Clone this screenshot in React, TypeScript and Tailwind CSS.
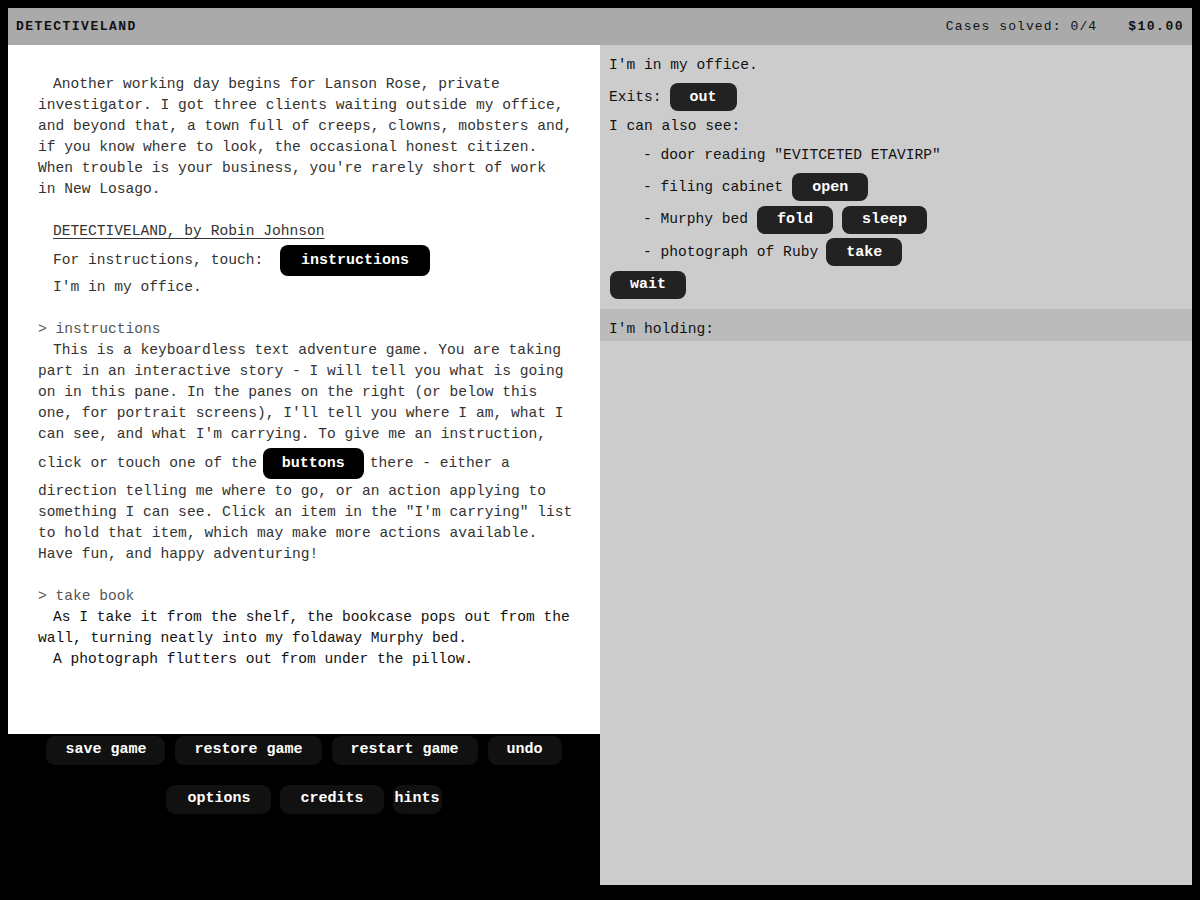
import React from "react";

const mono = "font-['Liberation_Mono',monospace]";

function Cmd({ children, className = "" }: { children: React.ReactNode; className?: string }) {
  return (
    <span
      className={`inline-flex h-[31px] items-center rounded-[8px] bg-black px-[19px] text-[15px] font-bold text-white ${className}`}
    >
      {children}
    </span>
  );
}

function Action({ children, className = "" }: { children: React.ReactNode; className?: string }) {
  return (
    <span
      className={`inline-flex h-[28px] items-center rounded-[8px] bg-[#222] px-[20px] text-[15px] font-bold text-white ${className}`}
    >
      {children}
    </span>
  );
}

function MenuButton({ children, className = "px-[19px]" }: { children: React.ReactNode; className?: string }) {
  return (
    <span
      className={`inline-flex h-[29px] items-center rounded-[9px] bg-[#111] text-[15px] font-bold text-white ${className}`}
    >
      {children}
    </span>
  );
}

function Transcript() {
  return (
    <div className="h-[689px] bg-white pl-[30px] pr-[20px] pt-[29px] text-[14.6px] leading-[21px] text-[#333]">
      <p className="indent-[15px] whitespace-nowrap">
        Another working day begins for Lanson Rose, private
        <br />
        investigator. I got three clients waiting outside my office,
        <br />
        and beyond that, a town full of creeps, clowns, mobsters and,
        <br />
        if you know where to look, the occasional honest citizen.
        <br />
        When trouble is your business, you're rarely short of work
        <br />
        in New Losago.
      </p>

      <p className="mt-[21px] ml-[15px] underline underline-offset-[3px]">DETECTIVELAND, by Robin Johnson</p>
      <div className="ml-[15px] mt-[3px] flex h-[31px] items-center whitespace-pre">
        <span>For instructions, touch: </span>
        <Cmd className="ml-[8px] px-[21px]">instructions</Cmd>
      </div>
      <p className="ml-[15px] mt-[1px]">I'm in my office.</p>

      <p className="mt-[21px] text-[#555]">&gt; instructions</p>
      <p className="indent-[15px] whitespace-nowrap">
        This is a keyboardless text adventure game. You are taking
        <br />
        part in an interactive story - I will tell you what is going
        <br />
        on in this pane. In the panes on the right (or below this
        <br />
        one, for portrait screens), I'll tell you where I am, what I
        <br />
        can see, and what I'm carrying. To give me an instruction,
      </p>
      <div className="flex h-[36px] items-center whitespace-pre">
        <span>click or touch one of the </span>
        <Cmd className="ml-[-3px] mr-[6px]">buttons</Cmd>
        <span>there - either a</span>
      </div>
      <p className="whitespace-nowrap">
        direction telling me where to go, or an action applying to
        <br />
        something I can see. Click an item in the "I'm carrying" list
        <br />
        to hold that item, which may make more actions available.
        <br />
        Have fun, and happy adventuring!
      </p>

      <p className="mt-[21px] text-[#555]">&gt; take book</p>
      <div className="text-[#111]">
        <p className="indent-[15px] whitespace-nowrap">
          As I take it from the shelf, the bookcase pops out from the
          <br />
          wall, turning neatly into my foldaway Murphy bed.
        </p>
        <p className="indent-[15px]">A photograph flutters out from under the pillow.</p>
      </div>
    </div>
  );
}

function RoomPane() {
  return (
    <div className="flex h-[840px] w-[592px] flex-col bg-[#ccc] text-[14.6px] leading-[21px] text-[#111]">
      <div className="px-[9px] pt-[10px]">
        <p>I'm in my office.</p>
        <div className="mt-[7px] flex h-[28px] items-center gap-[8px]">
          <span>Exits:</span>
          <Action>out</Action>
        </div>
        <div className="mt-[1px] flex h-[28px] items-center">I can also see:</div>
        <div className="ml-[34px] mt-[1px] flex h-[28px] items-center">- door reading "EVITCETED ETAVIRP"</div>
        <div className="ml-[34px] mt-[4px] flex h-[28px] items-center gap-[9px]">
          <span>- filing cabinet</span>
          <Action>open</Action>
        </div>
        <div className="ml-[34px] mt-[4.5px] flex h-[28px] items-center gap-[9px]">
          <span>- Murphy bed</span>
          <Action>fold</Action>
          <Action>sleep</Action>
        </div>
        <div className="ml-[34px] mt-[4.5px] flex h-[28px] items-center gap-[8px]">
          <span>- photograph of Ruby</span>
          <Action>take</Action>
        </div>
        <div className="mt-[4.5px] flex h-[28px] items-center pl-[1px]">
          <Action>wait</Action>
        </div>
      </div>
      <div className="mt-[10px] h-[32px] bg-[#bbb] px-[9px] pt-[10px]">I'm holding:</div>
    </div>
  );
}

export default function App() {
  return (
    <div className={`h-[900px] w-[1200px] bg-black p-[8px] ${mono}`}>
      <header className="flex h-[37px] items-center justify-between bg-[#aaa] px-[8px] text-[13px] text-[#111]">
        <span className="font-bold tracking-[1.5px]">DETECTIVELAND</span>
        <div className="flex items-center gap-[31px]">
          <span className="tracking-[1.1px]">Cases solved: 0/4</span>
          <span className="font-bold tracking-[1.5px]">$10.00</span>
        </div>
      </header>
      <div className="flex">
        <div className="w-[592px]">
          <Transcript />
          <div className="flex flex-col items-center">
            <div className="mt-[2px] flex gap-[10px]">
              <MenuButton>save game</MenuButton>
              <MenuButton>restore game</MenuButton>
              <MenuButton>restart game</MenuButton>
              <MenuButton>undo</MenuButton>
            </div>
            <div className="mt-[20px] flex gap-[9px]">
              <MenuButton className="px-[21px]">options</MenuButton>
              <MenuButton className="px-[20px]">credits</MenuButton>
              <MenuButton className="px-[2px]">hints</MenuButton>
            </div>
          </div>
        </div>
        <RoomPane />
      </div>
    </div>
  );
}
